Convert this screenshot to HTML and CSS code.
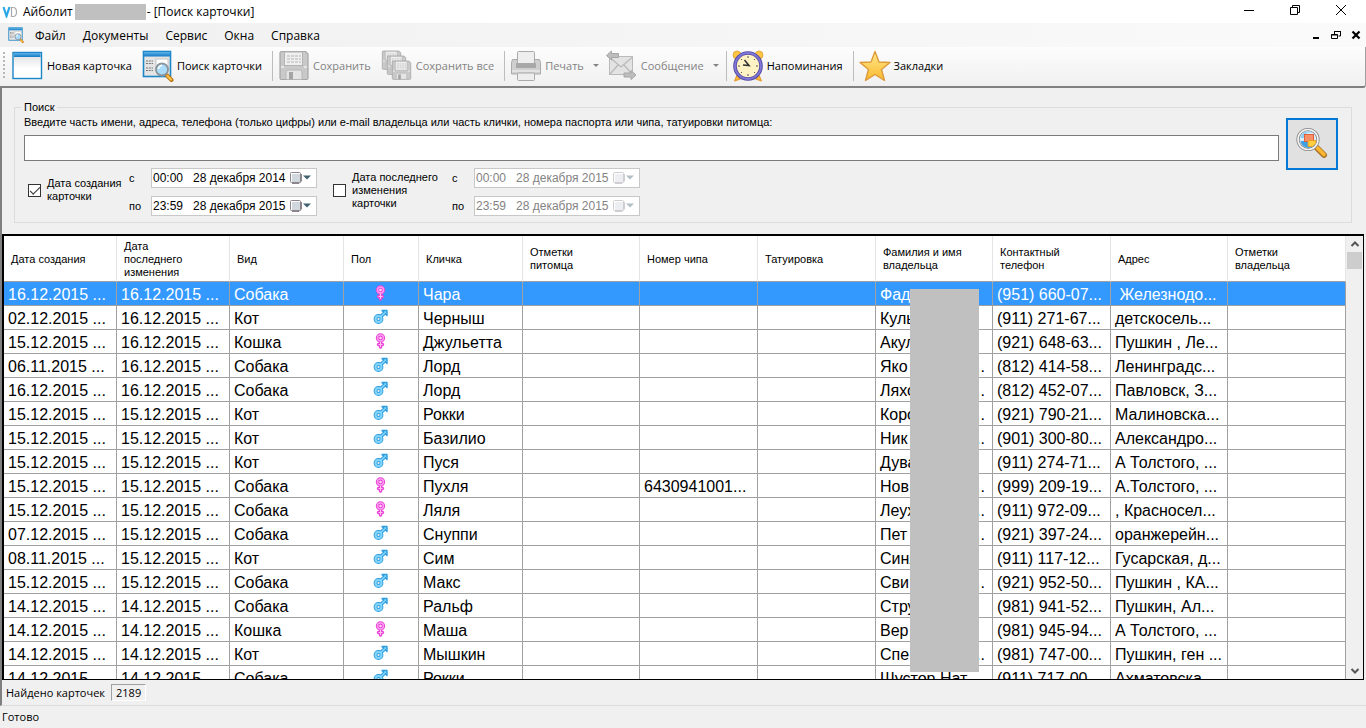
FILE: index.html
```html
<!DOCTYPE html>
<html lang="ru">
<head>
    <meta charset="UTF-8">
    <meta name="viewport" content="width=device-width, initial-scale=1.0">
    <title>Айболит - [Поиск карточки]</title>
    <link rel="stylesheet" href="styles.css">
</head>
<body>
    <svg class="defs" aria-hidden="true">
        <defs>
            <linearGradient id="blueBar" x1="0" y1="0" x2="0" y2="1">
                <stop offset="0" stop-color="#5db4ea"/>
                <stop offset="1" stop-color="#1379c4"/>
            </linearGradient>
            <linearGradient id="page" x1="0" y1="0" x2="0" y2="1">
                <stop offset="0" stop-color="#d8dadc"/>
                <stop offset="0.6" stop-color="#ffffff"/>
            </linearGradient>
            <linearGradient id="gold" x1="0" y1="0" x2="0" y2="1">
                <stop offset="0" stop-color="#ffe98a"/>
                <stop offset="1" stop-color="#fbb92f"/>
            </linearGradient>
            <symbol id="find" viewBox="0 0 32 32">
                <rect x="1.5" y="1.5" width="27" height="25" fill="#e4e4e4" stroke="#1c86c8" stroke-width="1.6"/>
                <rect x="2" y="2" width="26" height="4.5" fill="url(#blueBar)"/>
                <rect x="14" y="9" width="12" height="12" fill="#fff" stroke="#c4c4c4"/>
                <path d="M4 11h7M4 13.500h7M4 18h7M4 20.500h7" stroke="#777" stroke-width="1.2" stroke-dasharray="2 .8"/>
                <path d="M25 25.500l4.500 4.500" stroke="#b9700f" stroke-width="4" stroke-linecap="round"/>
                <path d="M25.500 26l3.500 3.500" stroke="#ffc246" stroke-width="2.400" stroke-linecap="round"/>
                <circle cx="20" cy="19.500" r="6" fill="#a9ddfb" stroke="#8b959d" stroke-width="1.800"/>
                <path d="M16.500 19a3.500 3.500 0 0 1 3.500-3.500" fill="none" stroke="#fff" stroke-width="1.600"/>
            </symbol>
            <symbol id="floppy" viewBox="0 0 32 32">
                <path d="M2 3q0-1.500 1.500-1.500h24l2.500 2.500v24q0 1.500-1.500 1.500h-25q-1.500 0-1.500-1.500z" fill="#c9c9c9" stroke="#a6a6a6" stroke-width="1.200"/>
                <rect x="6.500" y="2" width="18" height="13.500" fill="#efefef" stroke="#b4b4b4"/>
                <path d="M9 6h14M9 9h14M9 12h14" stroke="#b4b4b4" stroke-dasharray="3 1"/>
                <path d="M3 17h3M26 17h3" stroke="#e6e6e6" stroke-width="2"/>
                <path d="M8 29.500v-7.500q0-2 2-2h12q2 0 2 2v7.500z" fill="#e4e4e4" stroke="#b6b6b6"/>
                <rect x="11" y="22" width="4" height="7.500" fill="#a4a4a4"/>
            </symbol>
            <symbol id="female" viewBox="0 0 16 16">
                <path d="M7.500 9v5M5.500 11.500h4" stroke="#ea44d6" stroke-width="3.400" stroke-linecap="round"/>
                <circle cx="7.500" cy="5" r="3" fill="#ffd8f8" stroke="#ea44d6" stroke-width="3.400"/>
                <circle cx="7.500" cy="5" r="3" fill="none" stroke="#ff9af2" stroke-width="1.400"/>
                <path d="M7.500 8.500v5.500M5.500 11.500h4" stroke="#ffc4f4"/>
            </symbol>
            <symbol id="male" viewBox="0 0 16 16">
                <path d="M8 7.500l3.500-3.500" stroke="#2b9de0" stroke-width="3.600"/>
                <path d="M9 1.500h5v5z" fill="#7fd2fb" stroke="#2b9de0" stroke-width="1.400" stroke-linejoin="round"/>
                <circle cx="5.500" cy="10" r="3" fill="#e8f7ff" stroke="#2b9de0" stroke-width="3.800"/>
                <circle cx="5.500" cy="10" r="3" fill="none" stroke="#86d6fc" stroke-width="2"/>
                <path d="M7.500 8l4.500-4.500" stroke="#86d6fc" stroke-width="1.600"/>
            </symbol>
            <symbol id="calendar" viewBox="0 0 24 14">
                <rect x="1.500" y="1.500" width="10" height="10" rx="1" fill="#fff" stroke="#8a858c"/>
                <path d="M3 4h8M3 6h8M3 8h8M3 10h8M4 3v8M6 3v8M8 3v8M10 3v8" stroke="#b8c0cc" stroke-width=".8"/>
                <path d="M3 12.500h7l2.500-2.500v-7" fill="none" stroke="#8c868c"/>
                <path d="M14 4.500h8l-4 4z" fill="#41616f"/>
            </symbol>
        </defs>
    </svg>

    <header class="titlebar">
        <svg class="logo" viewBox="0 0 16 12" aria-hidden="true">
            <path d="M1.500 1l3 9 3-9" fill="none" stroke="#29a8e8" stroke-width="2.200"/>
            <path d="M9.500 1.500v9h1.500q3.500 0 3.500-4.500t-3.500-4.500z" fill="none" stroke="#a8a8a8" stroke-width="1.200"/>
        </svg>
        <h1>Айболит</h1>
        <span class="blank"></span>
        <span>- [Поиск карточки]</span>
        <div class="window-buttons">
            <button type="button" aria-label="Свернуть"><svg viewBox="0 0 12 12"><path d="M1 6.500h10"/></svg></button>
            <button type="button" aria-label="Восстановить"><svg viewBox="0 0 12 12"><path d="M1.500 3.500h7v7h-7zM3.500 3.500v-2h7v7h-2"/></svg></button>
            <button type="button" aria-label="Закрыть"><svg viewBox="0 0 12 12"><path d="M1 1l10 10M11 1L1 11"/></svg></button>
        </div>
    </header>

    <nav class="menubar">
        <svg class="menu-icon"><use href="#find"/></svg>
        <button type="button">Файл</button>
        <button type="button">Документы</button>
        <button type="button">Сервис</button>
        <button type="button">Окна</button>
        <button type="button">Справка</button>
        <div class="child-buttons">
            <button type="button" aria-label="Свернуть карточку"><svg viewBox="0 0 10 10"><path d="M2 8h6" stroke-width="2"/></svg></button>
            <button type="button" aria-label="Восстановить карточку"><svg viewBox="0 0 10 10"><path d="M3.500 4v-2.500h6v4.500h-2M3 1.500h7M.5 4.500h6v4h-6zM.5 5h6"/></svg></button>
            <button type="button" aria-label="Закрыть карточку"><svg viewBox="0 0 10 10"><path d="M1.500 1.500l7 7M8.500 1.500l-7 7" stroke-width="2.200"/></svg></button>
        </div>
    </nav>

    <div class="toolbar">
        <span class="grip"></span>
        <button type="button">
            <svg viewBox="0 0 32 32">
                <rect x="1" y="2.500" width="28.500" height="26" fill="url(#page)" stroke="#1c86c8" stroke-width="1.400"/>
                <rect x="2" y="3" width="26.500" height="4" fill="url(#blueBar)"/>
            </svg>
            Новая карточка
        </button>
        <button type="button"><svg><use href="#find"/></svg>Поиск карточки</button>
        <span class="separator"></span>
        <button type="button" disabled><svg><use href="#floppy"/></svg>Сохранить</button>
        <button type="button" disabled>
            <svg viewBox="0 0 32 32">
                <use href="#floppy" width="21" height="21"/>
                <use href="#floppy" x="5" y="5" width="21" height="21"/>
                <use href="#floppy" x="10" y="10" width="21" height="21"/>
            </svg>
            Сохранить все
        </button>
        <span class="separator"></span>
        <button type="button" class="split" disabled>
            <svg viewBox="0 0 32 32">
                <path d="M2.500 9.500h5v4h17v-4h5l1 3v11.500h-29v-11.500z" fill="#cfcfcf" stroke="#aaa"/>
                <rect x="7.500" y="1.500" width="17" height="12" rx="1" fill="#eee" stroke="#aaa"/>
                <rect x="6" y="13" width="20" height="5" fill="#a8a8a8"/>
                <path d="M2 21h28" stroke="#e2e2e2" stroke-width="2"/>
                <rect x="7.500" y="23" width="17" height="7.500" rx="1" fill="#ededed" stroke="#aaa"/>
            </svg>
            Печать
            <i class="arrow"></i>
        </button>
        <button type="button" class="split" disabled>
            <svg viewBox="0 0 32 32">
                <rect x="3.500" y="6.500" width="23" height="18" fill="#e3e3e3" stroke="#bababa"/>
                <path d="M4 24l8-9M26 24l-8-9M4 7.500l11 9.500 11-9.500" fill="none" stroke="#bababa" stroke-width="1.300"/>
                <path d="M.5 5.500l5-4.500v2.500h7v4h-7v2.500z" fill="#bdbdbd" stroke="#a6a6a6"/>
                <path d="M30 25l-5-4.500v2.500h-7v4h7v2.500z" fill="#bdbdbd" stroke="#a6a6a6"/>
            </svg>
            Сообщение
            <i class="arrow"></i>
        </button>
        <span class="separator"></span>
        <button type="button">
            <svg viewBox="0 0 32 32">
                <circle cx="5" cy="5" r="4" fill="#ffc545" stroke="#d8982a" stroke-width=".7"/>
                <circle cx="27" cy="5" r="4" fill="#ffc545" stroke="#d8982a" stroke-width=".7"/>
                <path d="M5 25l-2.500 6 6-2zM27 25l2.500 6-6-2z" fill="#f8b53a" stroke="#e39a24"/>
                <circle cx="16" cy="16" r="13" fill="#fff2c4" stroke="#51489f" stroke-width="3.600"/>
                <circle cx="16" cy="16" r="13" fill="none" stroke="#8077d8" stroke-width="1.800"/>
                <path d="M16 6v2M16 24v2M6 16h2M24 16h2M9 9l1 1M23 9l-1 1M9 23l1-1M23 23l-1-1" stroke="#555"/>
                <path d="M12.500 10l4.500 5.500-6-.5" fill="none" stroke="#333" stroke-width="1.600"/>
            </svg>
            Напоминания
        </button>
        <span class="separator"></span>
        <button type="button">
            <svg viewBox="0 0 32 32">
                <path d="M16 1.500l4 10.500 11 .5-8.500 7 3 11L16 24.500 6.500 30.500l3-11-8.500-7 11-.5z" fill="url(#gold)" stroke="#dd9a3c" stroke-width="1.400" stroke-linejoin="round"/>
            </svg>
            Закладки
        </button>
    </div>

    <main class="workspace">
        <fieldset class="search">
            <legend>Поиск</legend>
            <div class="search-row">
                <div class="query">
                    <label for="query">Введите часть имени, адреса, телефона (только цифры) или e-mail владельца или часть клички, номера паспорта или чипа, татуировки питомца:</label>
                    <input type="text" id="query">
                </div>
                <button type="button" class="search-button" aria-label="Найти">
                    <svg viewBox="0 0 32 32">
                        <path d="M21 21l7 7" stroke="#a7742a" stroke-width="6" stroke-linecap="round"/>
                        <path d="M21 20.500l7 7" stroke="#fdb62f" stroke-width="3.600" stroke-linecap="round"/>
                        <circle cx="12" cy="12.500" r="10" fill="#d9effb" stroke="#828282" stroke-width="3.200"/>
                        <circle cx="12" cy="12.500" r="10" fill="none" stroke="#f3f3f3" stroke-width="1.600"/>
                        <path d="M4.500 14a8 8 0 0 0 13 5v-5z" fill="#3f9fe0"/>
                        <path d="M4.500 11a8 8 0 0 1 12-5.500h-6v5.500z" fill="#8ccdf4"/>
                        <rect x="8.500" y="7.500" width="9" height="7" fill="#f79069" stroke="#e0603e"/>
                        <path d="M12 13.500h8l-.5 3-3 3h-4.500z" fill="#ffce3d" stroke="#e89b20" stroke-width=".8"/>
                    </svg>
                </button>
            </div>
            <div class="filters">
                <label class="check created"><input type="checkbox" checked><span>Дата создания<br>карточки</span></label>
                <div class="range">
                    <label for="createdFrom">с</label>
                    <div class="date"><input type="text" id="createdFrom" value="00:00   28 декабря 2014"><button type="button" aria-label="Календарь"><svg><use href="#calendar"/></svg></button></div>
                    <label for="createdTo">по</label>
                    <div class="date"><input type="text" id="createdTo" value="23:59   28 декабря 2015"><button type="button" aria-label="Календарь"><svg><use href="#calendar"/></svg></button></div>
                </div>
                <label class="check changed"><input type="checkbox"><span>Дата последнего<br>изменения<br>карточки</span></label>
                <div class="range">
                    <label for="changedFrom">с</label>
                    <div class="date"><input type="text" id="changedFrom" value="00:00   28 декабря 2015" disabled><button type="button" aria-label="Календарь" disabled><svg><use href="#calendar"/></svg></button></div>
                    <label for="changedTo">по</label>
                    <div class="date"><input type="text" id="changedTo" value="23:59   28 декабря 2015" disabled><button type="button" aria-label="Календарь" disabled><svg><use href="#calendar"/></svg></button></div>
                </div>
            </div>
        </fieldset>

        <div class="grid">
            <div class="grid-view">
                <table>
                    <colgroup>
                        <col class="w-date"><col class="w-date"><col class="w-kind"><col class="w-sex">
                        <col class="w-name"><col class="w-note"><col class="w-text"><col class="w-text">
                        <col class="w-note"><col class="w-text"><col class="w-note"><col class="w-text">
                    </colgroup>
                    <thead>
                        <tr>
                            <th>Дата создания</th>
                            <th class="wrap">Дата последнего изменения</th>
                            <th>Вид</th>
                            <th>Пол</th>
                            <th>Кличка</th>
                            <th class="wrap">Отметки питомца</th>
                            <th>Номер чипа</th>
                            <th>Татуировка</th>
                            <th>Фамилия и имя владельца</th>
                            <th>Контактный телефон</th>
                            <th>Адрес</th>
                            <th class="wrap">Отметки владельца</th>
                        </tr>
                    </thead>
                    <tbody id="cards"></tbody>
                </table>
                <div class="mask"></div>
            </div>
            <div class="scrollbar">
                <button type="button" aria-label="Вверх"><svg viewBox="0 0 10 6"><path d="M1.500 5l3.500-3.500 3.500 3.500"/></svg></button>
                <span class="thumb"></span>
                <button type="button" aria-label="Вниз"><svg viewBox="0 0 10 6"><path d="M1.500 1l3.500 3.500 3.500-3.500"/></svg></button>
            </div>
        </div>

        <div class="summary">Найдено карточек <output>2189</output></div>
    </main>

    <footer class="statusbar">Готово</footer>

    <script>
        // created, changed, kind, sex, name, chip, owner, owner tail, phone, address
        const cards = [
            ['16.12.2015', '16.12.2015', 'Собака', 'female', 'Чара', '', 'Фад', '', '(951) 660-07', '\u00a0Железнодо...'],
            ['02.12.2015', '16.12.2015', 'Кот', 'male', 'Черныш', '', 'Куль', '', '(911) 271-67', 'детскосель...'],
            ['15.12.2015', '16.12.2015', 'Кошка', 'female', 'Джульетта', '', 'Акул', '', '(921) 648-63', 'Пушкин , Ле...'],
            ['06.11.2015', '16.12.2015', 'Собака', 'male', 'Лорд', '', 'Яко', '.', '(812) 414-58', 'Ленинградс...'],
            ['16.12.2015', '16.12.2015', 'Собака', 'male', 'Лорд', '', 'Ляхо', '.', '(812) 452-07', 'Павловск, З...'],
            ['15.12.2015', '15.12.2015', 'Кот', 'male', 'Рокки', '', 'Коро', '.', '(921) 790-21', 'Малиновска...'],
            ['15.12.2015', '15.12.2015', 'Кот', 'male', 'Базилио', '', 'Ник', '..', '(901) 300-80', 'Александро...'],
            ['15.12.2015', '15.12.2015', 'Кот', 'male', 'Пуся', '', 'Дува', '', '(911) 274-71', 'А Толстого, ...'],
            ['15.12.2015', '15.12.2015', 'Собака', 'female', 'Пухля', '6430941001...', 'Нов', '.', '(999) 209-19', 'А.Толстого, ...'],
            ['15.12.2015', '15.12.2015', 'Собака', 'female', 'Ляля', '', 'Леух', '..', '(911) 972-09', ', Красносел...'],
            ['07.12.2015', '15.12.2015', 'Собака', 'male', 'Снуппи', '', 'Пет', '.', '(921) 397-24', 'оранжерейн...'],
            ['08.11.2015', '15.12.2015', 'Кот', 'male', 'Сим', '', 'Синя', '', '(911) 117-12', 'Гусарская, д...'],
            ['15.12.2015', '15.12.2015', 'Собака', 'male', 'Макс', '', 'Сви', '.', '(921) 952-50', 'Пушкин , КА...'],
            ['14.12.2015', '14.12.2015', 'Собака', 'male', 'Ральф', '', 'Стру', '', '(981) 941-52', 'Пушкин, Ал...'],
            ['14.12.2015', '14.12.2015', 'Кошка', 'female', 'Маша', '', 'Вер', '', '(981) 945-94', 'А Толстого, ...'],
            ['14.12.2015', '14.12.2015', 'Кот', 'male', 'Мышкин', '', 'Спе', '..', '(981) 747-00', 'Пушкин, ген ...'],
            ['14.12.2015', '14.12.2015', 'Собака', 'male', 'Рокки', '', 'Шустор Нат...', '', '(911) 717-00', 'Ахматовска...']
        ];

        document.getElementById('cards').innerHTML = cards.map((c, i) => `
            <tr${i === 0 ? ' class="selected"' : ''}>
                <td>${c[0]} ...</td>
                <td>${c[1]} ...</td>
                <td>${c[2]}</td>
                <td class="sex"><svg><use href="#${c[3]}"/></svg></td>
                <td>${c[4]}</td>
                <td></td>
                <td>${c[5]}</td>
                <td></td>
                <td><div class="owner"><span>${c[6]}</span><span>${c[7]}</span></div></td>
                <td>${c[8]}...</td>
                <td>${c[9]}</td>
                <td></td>
            </tr>`).join('');
    </script>
</body>
</html>
```
FILE: styles.css
```css
:root {
    --face: #f0f0f0;
    --line: #a0a0a0;
    --light-line: #dcdcdc;
    --accent: #0078d7;
    --selection: #3399ff;
    --mask: #c0c0c0;
    --ui-font: "Open Sans", "Noto Sans", sans-serif;
    --form-font: "Liberation Sans", Arial, sans-serif;
}

* {
    box-sizing: border-box;
}

body {
    margin: 0;
    height: 100vh;
    display: flex;
    flex-direction: column;
    background-color: var(--face);
    color: #000;
    font-family: var(--ui-font);
    font-size: 11px;
    overflow: hidden;
}

button {
    margin: 0;
    padding: 0;
    border: none;
    background: none;
    color: inherit;
    font: inherit;
}

.defs {
    position: absolute;
    width: 0;
    height: 0;
}

/* Title bar */
.titlebar {
    display: flex;
    align-items: center;
    height: 23px;
    padding: 0 2px;
    background-color: #fff;
    font-size: 12px;
}

.titlebar h1 {
    margin: 0 2px 0 5px;
    font-size: 12px;
    font-weight: normal;
}

.logo {
    width: 16px;
    height: 12px;
}

.blank {
    width: 71px;
    height: 16px;
    background-color: var(--mask);
    margin-right: 1px;
}

.window-buttons {
    display: flex;
    margin-left: auto;
}

.window-buttons button {
    width: 46px;
    height: 22px;
}

.window-buttons svg {
    width: 12px;
    height: 12px;
    fill: none;
    stroke: #000;
}

/* Menu */
.menubar {
    display: flex;
    align-items: center;
    height: 24px;
    padding-left: 8px;
    background: linear-gradient(to right, #f0f0f0, #fafafa);
    font-size: 12px;
}

.menubar > button {
    margin-right: 17px;
}

.menu-icon {
    width: 16px;
    height: 16px;
    margin-right: 11px;
}

.child-buttons {
    display: flex;
    gap: 10px;
    margin-left: auto;
    padding-right: 5px;
}

.child-buttons svg {
    display: block;
    width: 10px;
    height: 10px;
    fill: none;
    stroke: #000;
}

/* Toolbar */
.toolbar {
    display: flex;
    align-items: center;
    height: 41px;
    padding: 0 0 2px 3px;
    background: linear-gradient(#fdfdfd, #f0f0f0);
    border-bottom: 2px solid #808080;
    border-right: 1px solid var(--line);
    border-radius: 0 0 3px 0;
}

.toolbar button {
    display: flex;
    align-items: center;
    gap: 3px;
    margin-right: 10px;
}

.toolbar button.split {
    margin-right: 7px;
}

.toolbar button:disabled {
    color: #838383;
}

.toolbar svg {
    width: 32px;
    height: 32px;
}

.grip {
    width: 2px;
    height: 28px;
    margin-right: 7px;
    background: repeating-linear-gradient(#b8b8b8 0 2px, transparent 2px 4px);
}

.separator {
    width: 1px;
    height: 30px;
    margin-right: 5px;
    background-color: #bdbdbd;
}

.arrow {
    margin-left: 6px;
    border: 3px solid transparent;
    border-top-color: #838383;
    border-bottom-width: 0;
}

/* Search panel */
.workspace {
    flex: 1;
    min-height: 0;
    display: flex;
    flex-direction: column;
    padding: 13px 2px 0 0;
    border-left: 2px solid #808080;
    border-bottom: 1px solid var(--light-line);
}

.search {
    margin: 0 12px 11px;
    padding: 2px 13px 6px 9px;
    border: 1px solid var(--light-line);
    font-family: var(--form-font);
    font-size: 11px;
    line-height: 13px;
}

.search legend {
    margin-left: -3px;
    padding: 0 3px;
}

.search-row {
    display: flex;
    align-items: flex-end;
    gap: 7px;
}

.query {
    flex: 1;
    padding-bottom: 9px;
}

.query label {
    display: block;
}

.query input {
    display: block;
    width: 100%;
    height: 26px;
    margin-top: 6px;
    border: 1px solid #7a7a7a;
    background-color: #fff;
    font: inherit;
}

.search-button {
    width: 52px;
    height: 52px;
    border: 2px solid var(--accent);
    background-color: #e1e1e1;
}

.search-button svg {
    width: 32px;
    height: 32px;
}

.filters {
    display: flex;
    align-items: center;
    margin-top: -2px;
    padding-left: 4px;
}

.check {
    display: flex;
    align-items: center;
    gap: 6px;
    margin-bottom: 4px;
}

.created {
    width: 101px;
}

.changed {
    width: 119px;
    margin-left: 16px;
}

.check span {
    white-space: nowrap;
}

.check input {
    appearance: none;
    display: grid;
    place-items: center;
    flex: none;
    width: 13px;
    height: 13px;
    margin: 0;
    border: 1px solid #333;
    background-color: #fff;
}

.check input:checked::before {
    content: "";
    width: 9px;
    height: 4px;
    border: solid #333;
    border-width: 0 0 1px 1px;
    transform: translateY(-1px) rotate(-45deg);
}

.range {
    display: grid;
    grid-template-columns: 22px 166px;
    row-gap: 8px;
    align-items: center;
}

.date {
    display: flex;
    align-items: center;
    height: 20px;
    border: 1px solid #c8c8c8;
    background-color: #fff;
}

.date input {
    flex: 1;
    min-width: 0;
    padding: 0 1px;
    border: none;
    background: none;
    color: #000;
    font-family: var(--form-font);
    font-size: 12px;
    white-space: pre;
}

.date input:disabled {
    color: #838383;
}

.date svg {
    display: block;
    width: 24px;
    height: 14px;
    margin-right: 3px;
}

.date button:disabled {
    opacity: 0.4;
}

/* Cards grid */
.grid {
    flex: 1;
    min-height: 0;
    display: flex;
    border: solid #000;
    border-width: 2px 1px 1px 2px;
    background-color: #fff;
}

.grid-view {
    position: relative;
    flex: 1;
    overflow: hidden;
}

table {
    width: 100%;
    table-layout: fixed;
    border-collapse: separate;
    border-spacing: 0;
    font-family: var(--form-font);
}

.w-date { width: 113px; }
.w-kind { width: 114px; }
.w-sex { width: 75px; }
.w-name { width: 104px; }
.w-note { width: 117px; }
.w-text { width: 118px; }

th {
    height: 46px;
    padding: 1px 20px 0 7px;
    border-right: 1px solid #e5e5e5;
    border-bottom: 1px solid var(--line);
    font-size: 11px;
    line-height: 13px;
    font-weight: normal;
    text-align: left;
}

th.wrap {
    padding-right: 36px;
}

td {
    height: 24px;
    padding: 2px 4px 0;
    border-right: 1px solid var(--line);
    border-bottom: 1px solid var(--line);
    font-size: 16px;
    line-height: 21px;
    white-space: nowrap;
    overflow: hidden;
}

.selected td {
    background-color: var(--selection);
    color: #fff;
}

.sex svg {
    display: block;
    width: 16px;
    height: 16px;
    margin: 0 auto 3px;
}

.owner {
    display: flex;
    justify-content: space-between;
    padding-right: 3px;
}

.mask {
    position: absolute;
    top: 53px;
    left: 906px;
    width: 69px;
    height: 383px;
    background-color: var(--mask);
}

.scrollbar {
    display: flex;
    flex-direction: column;
    width: 17px;
    background-color: var(--face);
}

.scrollbar button {
    height: 16px;
}

.scrollbar button:last-child {
    margin-top: auto;
}

.scrollbar svg {
    display: block;
    width: 10px;
    height: 6px;
    margin: 0 auto;
    fill: none;
    stroke: #555;
    stroke-width: 2;
}

.thumb {
    height: 17px;
    margin: 0 1px;
    background-color: #cdcdcd;
}

/* Status rows */
.summary {
    display: flex;
    align-items: center;
    gap: 6px;
    height: 25px;
    padding-left: 4px;
}

.summary output {
    padding: 0 4px;
    border: 1px solid;
    border-color: var(--line) #fff #fff var(--line);
}

.statusbar {
    height: 22px;
    padding-left: 2px;
    line-height: 22px;
}
```
